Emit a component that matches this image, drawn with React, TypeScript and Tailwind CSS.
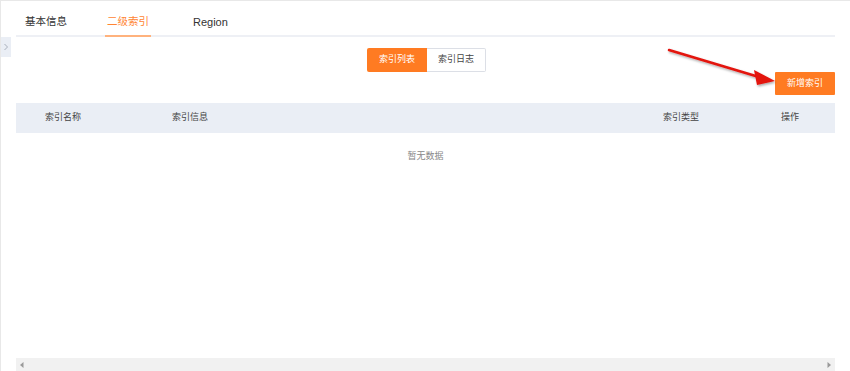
import React from "react";

const font = { fontFamily: '"Liberation Sans", "Noto Sans CJK SC", sans-serif' };

export default function App() {
  return (
    <div
      className="relative w-[850px] h-[371px] bg-white border-t border-l border-[#e8e8e8] overflow-hidden"
      style={font}
    >
      {/* collapse handle */}
      <div className="absolute left-0 top-[36px] w-[10px] h-[20px] bg-[#eaeef5] flex items-center justify-center">
        <svg width="6" height="8" viewBox="0 0 6 8">
          <path d="M1.5 1 L4.5 4 L1.5 7" fill="none" stroke="#a9b0bc" strokeWidth="1" />
        </svg>
      </div>

      <div className="ml-[15px] w-[819px] flex flex-col">
        {/* tabs */}
        <div className="flex h-[36px] pt-[8px] border-b-2 border-[#eef0f5] text-[10.5px] text-[#333]">
          <div className="ml-[9px] flex items-center">基本信息</div>
          <div className="ml-[38px] px-[2px] flex items-center text-[#ff8533] border-b-2 border-[#ffb27d] -mb-[2px]">
            二级索引
          </div>
          <div className="ml-[42px] flex items-center text-[11px]">Region</div>
        </div>

        {/* segmented switch */}
        <div className="flex justify-center mt-[11px] text-[9px]">
          <div className="flex h-[24px] ml-[2px]">
            <div className="w-[60px] flex items-center justify-center bg-[#ff7b22] text-white rounded-l-[2px]">
              索引列表
            </div>
            <div className="w-[59px] flex items-center justify-center border border-l-0 border-[#dcdfe6] text-[#444] rounded-r-[2px]">
              索引日志
            </div>
          </div>
        </div>

        {/* add button */}
        <div className="flex justify-end">
          <div className="w-[60px] h-[23px] flex items-center justify-center bg-[#ff7b22] text-white text-[9px] rounded-[1px]">
            新增索引
          </div>
        </div>

        {/* table */}
        <div className="mt-[8px] flex flex-col h-[268px] text-[9px]">
          <div className="flex h-[30px] bg-[#eaeef5] text-[#444] items-center">
            <div className="w-[128px] pl-[29px]">索引名称</div>
            <div className="w-[491px] pl-[28px]">索引信息</div>
            <div className="w-[118px] pl-[28px]">索引类型</div>
            <div className="w-[82px] pl-[28px]">操作</div>
          </div>
          <div className="flex-1 flex justify-center pt-[17px] text-[#888]">暂无数据</div>
          <div className="h-[13px] bg-[#f1f1f1] flex items-center justify-between px-[4px]">
            <svg width="4" height="6" viewBox="0 0 4 6">
              <path d="M3.5 0 L0 3 L3.5 6 Z" fill="#9a9a9a" />
            </svg>
            <svg width="4" height="6" viewBox="0 0 4 6">
              <path d="M0.5 0 L4 3 L0.5 6 Z" fill="#9a9a9a" />
            </svg>
          </div>
        </div>
      </div>

      {/* red annotation arrow */}
      <svg
        className="absolute left-[660px] top-[40px] pointer-events-none"
        width="125"
        height="50"
        viewBox="0 0 125 50"
      >
        <defs>
          <filter id="sh" x="-20%" y="-50%" width="140%" height="200%">
            <feDropShadow dx="1" dy="1.5" stdDeviation="1" floodColor="#000" floodOpacity="0.35" />
          </filter>
        </defs>
        <g filter="url(#sh)">
          <line x1="8" y1="9" x2="98" y2="36" stroke="#e3120c" strokeWidth="2.5" strokeLinecap="round" />
          <polygon points="114,40 93,29 96,44" fill="#e3120c" />
        </g>
      </svg>
    </div>
  );
}
